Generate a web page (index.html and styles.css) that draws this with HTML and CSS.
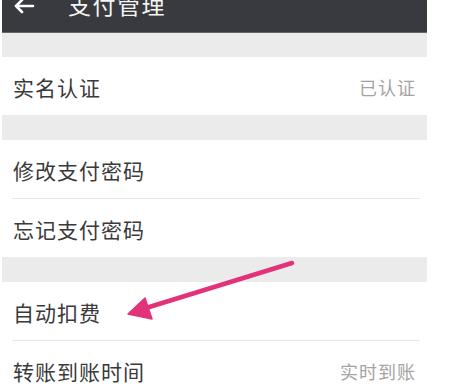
FILE: index.html
```html
<!DOCTYPE html>
<html lang="zh-CN">
<head>
<meta charset="utf-8">
<title>支付管理</title>
<link rel="stylesheet" href="styles.css">
</head>
<body>
<div class="app">
  <header class="topbar">
    <svg class="back" width="22" height="16" viewBox="0 0 22 16" aria-hidden="true">
      <path d="M20 8 H3 M9 2 L3 8 L9 14" fill="none" stroke="#ffffff" stroke-width="2.6" stroke-linecap="round" stroke-linejoin="round"/>
    </svg>
    <span class="title">支付管理</span>
  </header>
  <div class="gap gap-first"></div>
  <section class="group">
    <div class="row"><span class="label">实名认证</span><span class="value">已认证</span></div>
  </section>
  <div class="gap"></div>
  <section class="group">
    <div class="row divided"><span class="label">修改支付密码</span></div>
    <div class="row"><span class="label">忘记支付密码</span></div>
  </section>
  <div class="gap"></div>
  <section class="group">
    <div class="row divided"><span class="label">自动扣费</span></div>
    <div class="row"><span class="label">转账到账时间</span><span class="value">实时到账</span></div>
  </section>
</div>
<svg class="annotation" width="462" height="386" viewBox="0 0 462 386" aria-hidden="true">
  <line x1="292" y1="263" x2="146" y2="308" stroke="#e2337a" stroke-width="4.5" stroke-linecap="round"/>
  <polygon points="128,314 145,298 152,319" fill="#e2337a" stroke="#e2337a" stroke-width="1.5" stroke-linejoin="round"/>
</svg>
</body>
</html>
```

FILE: styles.css
```css
html, body {
  margin: 0;
  padding: 0;
  background: #ffffff;
}

body {
  width: 462px;
  height: 386px;
  overflow: hidden;
  position: relative;
  font-family: "Noto Sans CJK SC", "Noto Sans", sans-serif;
}

.app {
  width: 425px;
  margin-left: 2px;
  background: #ebebeb;
}

.topbar {
  height: 50px;
  margin-top: -18px;
  padding-bottom: 5px;
  box-sizing: border-box;
  background: #393a3f;
  border-bottom: 1px solid #66676b;
  display: flex;
  align-items: center;
  height: 51px;
}

.back {
  margin-left: 11px;
  margin-top: 2px;
}

.title {
  margin-left: 33px;
  color: #f4f4f4;
  font-size: 23px;
  letter-spacing: 1.5px;
  line-height: 1;
}

.gap {
  height: 25px;
  background: #ebebeb;
}

.gap-first {
  height: 24px;
}

.group {
  background: #ffffff;
}

.row {
  height: 58px;
  display: flex;
  align-items: center;
  justify-content: space-between;
  padding: 2px 11px 0 11px;
  box-sizing: border-box;
  position: relative;
}

.row.divided {
  border-bottom: 1px solid transparent;
  height: 59px;
}

.row.divided::after {
  content: "";
  position: absolute;
  left: 10px;
  right: 7px;
  bottom: -1px;
  height: 1px;
  background: #e6e6e6;
}

.label {
  color: #3a3a3a;
  font-size: 21px;
  letter-spacing: 1px;
}

.value {
  color: #a3a3a3;
  font-size: 18px;
  letter-spacing: 1px;
}

.annotation {
  position: absolute;
  left: 0;
  top: 0;
  pointer-events: none;
}
```
